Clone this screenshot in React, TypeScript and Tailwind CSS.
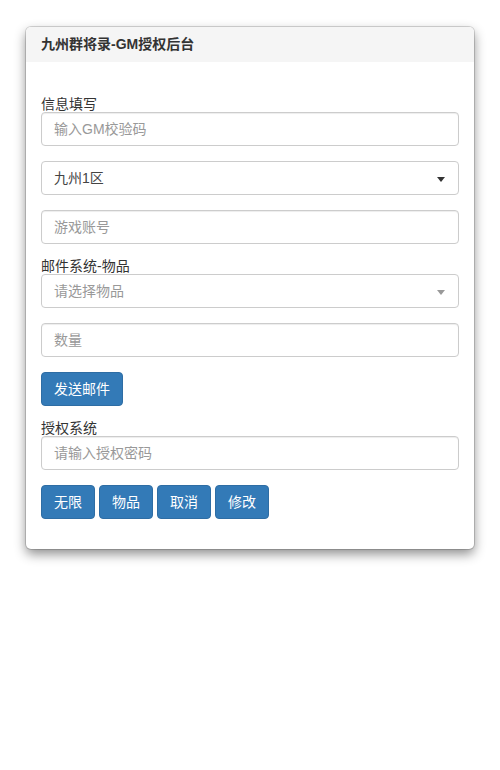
import React from "react";

const font = {
  fontFamily:
    '"Liberation Sans", Arial, "Noto Sans CJK SC", sans-serif',
};

function TextInput({ placeholder }: { placeholder: string }) {
  return (
    <input
      type="text"
      placeholder={placeholder}
      className="block w-full h-[34px] mb-[15px] px-[12px] text-[14px] text-[#555] border border-[#ccc] rounded-[4px] shadow-[inset_0_1px_1px_rgba(0,0,0,0.075)] outline-none placeholder:text-[#999] bg-white"
    />
  );
}

function FakeSelect({ value, placeholder }: { value?: string; placeholder?: string }) {
  return (
    <div className="relative flex items-center w-full h-[34px] mb-[15px] pl-[12px] pr-[20px] text-[14px] border border-[#ccc] rounded-[4px] bg-white">
      <span className={value ? "text-[#444]" : "text-[#999]"}>{value ?? placeholder}</span>
      <span
        className={
          "absolute right-[13px] top-[15px] w-0 h-0 border-x-[4px] border-x-transparent border-t-[5px] " +
          (value ? "border-t-[#333]" : "border-t-[#999]")
        }
      />
    </div>
  );
}

function Label({ children }: { children: React.ReactNode }) {
  return <div className="h-[15px] leading-[15px] text-[14px] text-[#333] whitespace-nowrap">{children}</div>;
}

function Btn({ children, mb }: { children: React.ReactNode; mb?: boolean }) {
  return (
    <button
      type="button"
      className={
        "h-[34px] px-[12px] text-[14px] text-white bg-[#337ab7] border border-[#2e6da4] rounded-[4px] leading-[20px] " +
        (mb ? "mb-[15px]" : "")
      }
    >
      {children}
    </button>
  );
}

export default function App() {
  return (
    <div className="min-h-[770px] bg-white pt-[27px]" style={font}>
      <div className="mx-auto w-[448px] bg-white rounded-[5px] shadow-[0_0_0_1px_rgba(0,0,0,0.15),0_5px_12px_rgba(0,0,0,0.45)]">
        <div className="h-[35px] px-[15px] flex items-center bg-[#f5f5f5] rounded-t-[5px] text-[14px] font-bold text-[#333]">
          九州群将录-GM授权后台
        </div>
        <div className="px-[15px] pt-[35px] pb-[15px]">
          <Label>信息填写</Label>
          <TextInput placeholder="输入GM校验码" />
          <FakeSelect value="九州1区" />
          <TextInput placeholder="游戏账号" />
          <Label>邮件系统-物品</Label>
          <FakeSelect placeholder="请选择物品" />
          <TextInput placeholder="数量" />
          <div className="mb-[15px]">
            <Btn>发送邮件</Btn>
          </div>
          <Label>授权系统</Label>
          <TextInput placeholder="请输入授权密码" />
          <div className="flex gap-[4px] mb-[15px]">
            <Btn>无限</Btn>
            <Btn>物品</Btn>
            <Btn>取消</Btn>
            <Btn>修改</Btn>
          </div>
        </div>
      </div>
    </div>
  );
}
